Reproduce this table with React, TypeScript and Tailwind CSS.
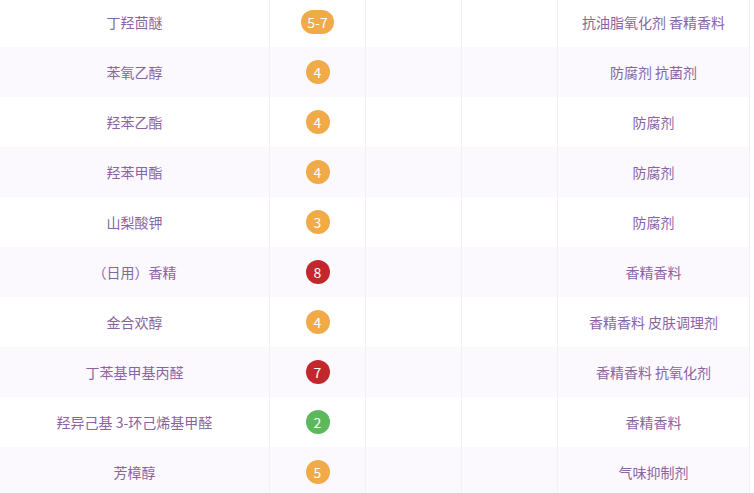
import React from 'react';

type Row = { name: string; score: string; uses: string };

const rows: Row[] = [
  { name: '丁羟茴醚', score: '5-7', uses: '抗油脂氧化剂 香精香料' },
  { name: '苯氧乙醇', score: '4', uses: '防腐剂 抗菌剂' },
  { name: '羟苯乙酯', score: '4', uses: '防腐剂' },
  { name: '羟苯甲酯', score: '4', uses: '防腐剂' },
  { name: '山梨酸钾', score: '3', uses: '防腐剂' },
  { name: '（日用）香精', score: '8', uses: '香精香料' },
  { name: '金合欢醇', score: '4', uses: '香精香料 皮肤调理剂' },
  { name: '丁苯基甲基丙醛', score: '7', uses: '香精香料 抗氧化剂' },
  { name: '羟异己基 3-环己烯基甲醛', score: '2', uses: '香精香料' },
  { name: '芳樟醇', score: '5', uses: '气味抑制剂' },
];

// colour follows the lower bound of the score range
function badgeColor(score: string) {
  const n = parseInt(score.split('-')[0], 10);
  if (n >= 7) return 'bg-[#c1272d]';
  if (n <= 2) return 'bg-[#5cb85c]';
  return 'bg-[#f0ab48]';
}

const Badge: React.FC<{ score: string }> = ({ score }) => (
  <span
    className={`inline-flex h-[24px] min-w-[24px] items-center justify-center rounded-full px-[6px] text-[14px] leading-none text-white ${badgeColor(score)}`}
  >
    {score}
  </span>
);

export default function App() {
  return (
    <div className="h-[493px] w-[754px] overflow-hidden bg-white font-['Noto_Sans_CJK_SC','Liberation_Sans',sans-serif]">
      <div className="-mt-[3px] w-[750px] border-r border-[#f2eff5]">
        {rows.map((r, i) => (
          <div
            key={i}
            className={`flex h-[50px] text-[14px] text-[#8a63a3] ${i % 2 === 1 ? 'bg-[#fbf9fe]' : 'bg-white'}`}
          >
            <div className="flex w-[270px] items-center justify-center border-r border-[#f2eff5]">{r.name}</div>
            <div className="flex w-[96px] items-center justify-center border-r border-[#f2eff5]">
              <Badge score={r.score} />
            </div>
            <div className="w-[96px] border-r border-[#f2eff5]" />
            <div className="w-[96px] border-r border-[#f2eff5]" />
            <div className="flex flex-1 items-center justify-center">{r.uses}</div>
          </div>
        ))}
      </div>
    </div>
  );
}
